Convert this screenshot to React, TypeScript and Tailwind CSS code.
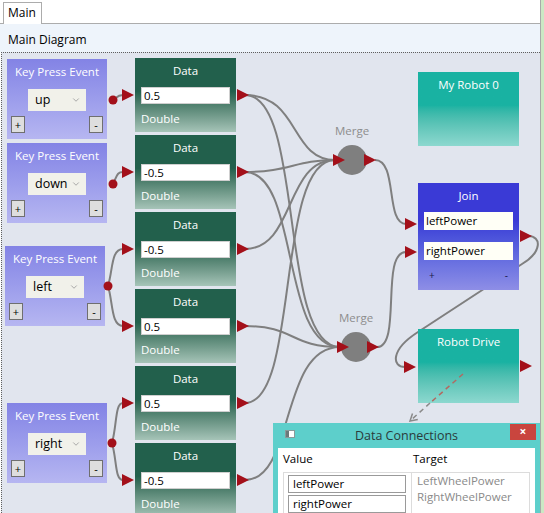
import { ChevronDown } from 'lucide-react';

const RED = '#a3101a';

function Btn({ label }: { label: string }) {
  return (
    <div className="w-[14px] h-[17px] bg-[#dedede] border border-[#6f6f6f] flex items-center justify-center text-[11px] leading-none text-black">
      {label}
    </div>
  );
}

function KeyPress({ pos, value }: { pos: string; value: string }) {
  return (
    <div className={`absolute ${pos} w-[100px] h-[80px] bg-gradient-to-b from-[#8383e5] to-[#b6b6f1] flex flex-col items-center`}>
      <div className="mt-[5px] text-[11.5px] leading-[16px] text-white">Key Press Event</div>
      <div className="mt-[9px] w-[58px] h-[22px] bg-[#f1f1ea] flex items-center justify-between pl-[7px] pr-[5px]">
        <span className="text-[12.5px] leading-none text-black">{value}</span>
        <ChevronDown size={10} strokeWidth={2} color="#9a9a9a" />
      </div>
      <div className="mt-[5px] w-full flex justify-between px-[4px]">
        <Btn label="+" />
        <Btn label="-" />
      </div>
    </div>
  );
}

function DataNode({ pos, value }: { pos: string; value: string }) {
  return (
    <div className={`absolute ${pos} left-[133px] w-[101px] h-[74px] bg-gradient-to-b from-[#22604c] from-45% to-[#a6c4b8] px-[6px] flex flex-col`}>
      <div className="mt-[5px] text-center text-[11.5px] leading-[16px] text-white">Data</div>
      <div className="mt-[8px] h-[17px] bg-white border border-[#cfcfcf] pl-[2px] text-[11.5px] leading-[15px] text-black">{value}</div>
      <div className="mt-[7px] text-[11.5px] leading-[16px] text-white">Double</div>
    </div>
  );
}

function TealNode({ pos, title }: { pos: string; title: string }) {
  return (
    <div className={`absolute ${pos} left-[416px] w-[101px] h-[74px] bg-gradient-to-b from-[#19b2a2] from-45% to-[#8cd8cf]`}>
      <div className="mt-[5px] text-center text-[11.5px] leading-[16px] text-white">{title}</div>
    </div>
  );
}

function Merge({ pos }: { pos: string }) {
  return (
    <div className={`absolute ${pos} w-[40px] flex flex-col items-center`}>
      <div className="text-[11.5px] leading-[16px] text-[#8d8d8d]">Merge</div>
      <div className="mt-[6px] w-[30px] h-[30px] rounded-full bg-[#7f7f7f]" />
    </div>
  );
}

const wires = [
  'M113 100 C117 97 118 95 123 95',
  'M113 184 C117 176 117 172 123 172',
  'M108 286 C113 270 111 249 123 249',
  'M108 286 C113 302 111 326 123 326',
  'M112 443 C117 425 115 403 123 403',
  'M112 443 C117 461 115 480 123 480',
  'M245 95 C300 95 290 160 335 160',
  'M245 95 C305 95 278 347 340 347',
  'M245 172 C290 172 295 160 335 160',
  'M245 172 C300 172 280 347 340 347',
  'M245 249 C295 249 285 160 335 160',
  'M245 326 C295 326 290 347 340 347',
  'M245 403 C300 403 275 160 335 160',
  'M245 480 C295 480 280 347 340 347',
  'M375 160 C398 160 385 224 406 224',
  'M377 347 C402 347 380 252 406 252',
  'M528 236 C542 236 542 252 522 264 L418 332 C390 350 392 367 405 367',
];

const arrows: [number, number][] = [
  [122, 95], [122, 172], [122, 249], [122, 326], [122, 403], [122, 480],
  [237, 95], [237, 172], [237, 249], [237, 326], [237, 403], [237, 480],
  [333, 160], [364, 160], [337, 347], [367, 347],
  [405, 224], [405, 252], [520, 236],
  [404, 367], [520, 366],
];

const dots: [number, number][] = [[113, 100], [113, 184], [108, 286], [112, 443]];

export default function App() {
  return (
    <div className="relative w-[544px] h-[513px] overflow-hidden flex bg-white font-['Open_Sans',sans-serif]">
      <div className="w-[541px] h-full flex flex-col border-r border-[#a9a9a9]">
        <div className="h-[24px] shrink-0 flex items-end border-b border-[#acacac]">
          <div className="ml-[3px] -mb-px w-[39px] h-[22px] pl-[4px] border border-b-0 border-[#acacac] bg-white text-[12px] leading-[20px] text-black">
            Main
          </div>
        </div>
        <div className="h-[28px] shrink-0 bg-[#eef4fb] pl-[8px] pt-[8px] text-[12px] leading-[16px] text-black">Main Diagram</div>
        <div className="relative flex-1 ml-[1px] border-l border-t border-dotted border-[#5f5f5f] bg-[#e1e5ee]">
          <svg className="absolute inset-0 overflow-visible" width="539" height="460">
            <g transform="translate(-2,-53)" fill="none" stroke="#7f7f7f" strokeWidth="2">
              {wires.map((d, i) => (
                <path key={i} d={d} />
              ))}
            </g>
          </svg>

          <KeyPress pos="left-[5px] top-[6px]" value="up" />
          <KeyPress pos="left-[5px] top-[90px]" value="down" />
          <KeyPress pos="left-[3px] top-[193px]" value="left" />
          <KeyPress pos="left-[5px] top-[350px]" value="right" />

          <DataNode pos="top-[5px]" value="0.5" />
          <DataNode pos="top-[82px]" value="-0.5" />
          <DataNode pos="top-[159px]" value="-0.5" />
          <DataNode pos="top-[236px]" value="0.5" />
          <DataNode pos="top-[313px]" value="0.5" />
          <DataNode pos="top-[390px]" value="-0.5" />

          <Merge pos="left-[330px] top-[70px]" />
          <Merge pos="left-[334px] top-[257px]" />

          <TealNode pos="top-[19px]" title="My Robot 0" />

          <div className="absolute left-[416px] top-[130px] w-[101px] h-[107px] bg-gradient-to-b from-[#3a3ad6] from-35% to-[#8e8ee6] px-[6px] flex flex-col">
            <div className="mt-[5px] text-center text-[11.5px] leading-[16px] text-white">Join</div>
            <div className="mt-[8px] h-[18px] bg-[#fffff6] pl-[2px] text-[11.5px] leading-[18px] text-black">leftPower</div>
            <div className="mt-[12px] h-[18px] bg-[#fffff6] pl-[2px] text-[11.5px] leading-[18px] text-black">rightPower</div>
            <div className="mt-[9px] flex justify-between px-[5px] text-[10px] leading-[12px] text-[#1a1a4a]">
              <span>+</span>
              <span>-</span>
            </div>
          </div>

          <TealNode pos="top-[276px]" title="Robot Drive" />

          <svg className="absolute inset-0 overflow-visible" width="539" height="460">
            <g transform="translate(-2,-53)">
              {arrows.map(([x, y], i) => (
                <polygon key={i} points={`${x},${y - 6} ${x + 12},${y} ${x},${y + 6}`} fill={RED} />
              ))}
              {dots.map(([x, y], i) => (
                <circle key={i} cx={x} cy={y} r="4.5" fill={RED} />
              ))}
              <line x1="463" y1="374" x2="430" y2="403" stroke="#b26a62" strokeWidth="1.5" strokeDasharray="5 4" />
              <line x1="430" y1="403" x2="410" y2="421" stroke="#8a8a8a" strokeWidth="1.5" strokeDasharray="5 4" />
              <polyline points="417.8,419.4 410,421 412.5,413.4" fill="none" stroke="#8a8a8a" strokeWidth="1.5" />
            </g>
          </svg>
        </div>
      </div>
      <div className="w-[3px] h-full bg-[#cbe8c4]" />

      <div className="absolute left-[273px] top-[423px] w-[267px] h-[100px] bg-[#5dcfcb] px-[5px] flex flex-col">
        <div className="relative h-[25px] shrink-0 flex items-center justify-center">
          <div className="absolute left-[7px] top-[7px] w-[10px] h-[8px] bg-white border border-[#8a9a9a] flex">
            <div className="w-[3px] h-full bg-[#6a7a7a]" />
          </div>
          <span className="text-[12.5px] leading-[16px] text-[#2b3b3b]">Data Connections</span>
          <div className="absolute left-[232px] top-[1px] w-[26px] h-[16px] bg-[#c9453e] flex items-center justify-center text-white text-[12px] font-bold leading-none">
            ×
          </div>
        </div>
        <div className="flex-1 bg-white px-[5px] pt-[3px]">
          <div className="flex text-[11.5px] leading-[16px] text-black">
            <span className="w-[130px]">Value</span>
            <span>Target</span>
          </div>
          <div className="mt-[5px] flex border border-[#dcdcdc] h-[60px]">
            <div className="w-[128px] border-r border-[#dcdcdc] pl-[4px] pt-[2px] flex flex-col gap-[2px]">
              <div className="w-[118px] h-[18px] border border-[#9a9a9a] pl-[4px] text-[11.5px] leading-[16px] text-black">leftPower</div>
              <div className="w-[118px] h-[18px] border border-[#9a9a9a] pl-[4px] text-[11.5px] leading-[16px] text-black">rightPower</div>
            </div>
            <div className="pl-[5px] flex flex-col text-[11.5px] leading-[16px] text-[#8a8a8a]">
              <span>LeftWheelPower</span>
              <span>RightWheelPower</span>
            </div>
          </div>
        </div>
      </div>
    </div>
  );
}
